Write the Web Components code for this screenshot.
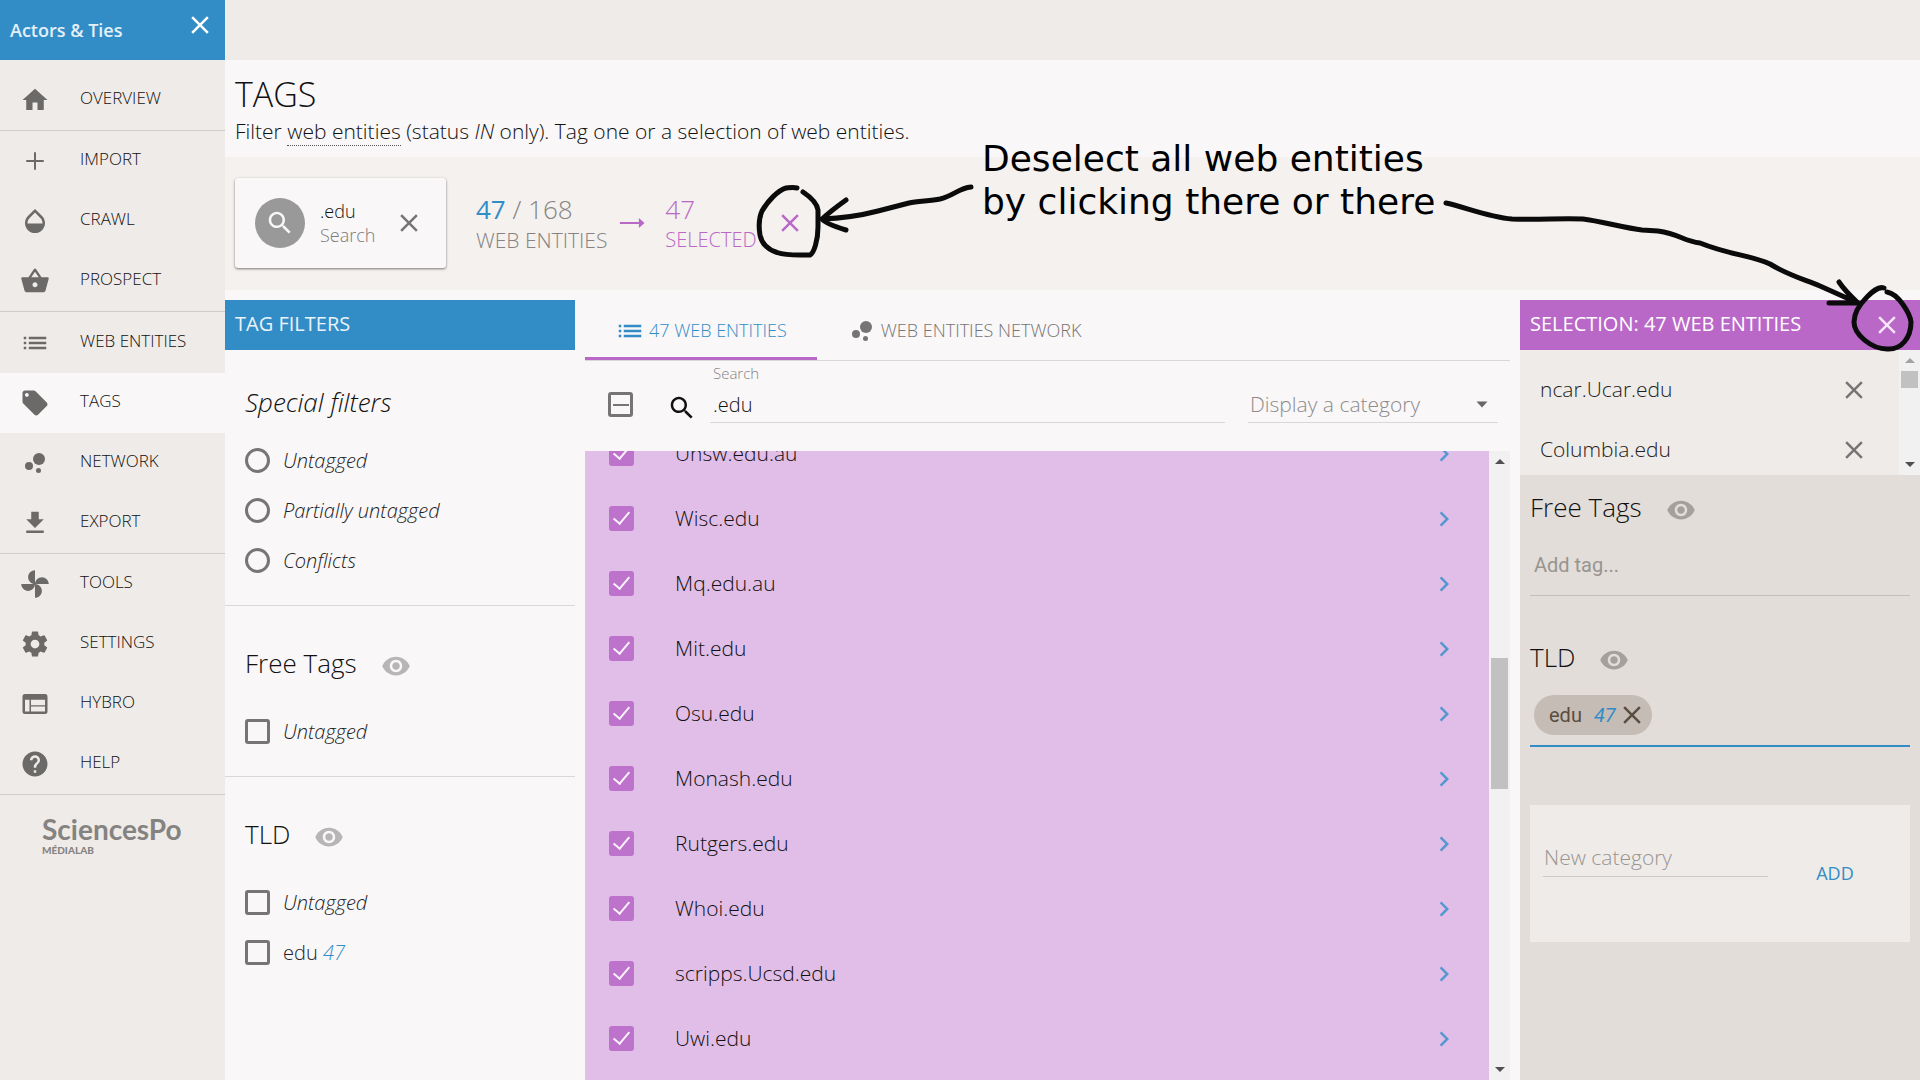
<!DOCTYPE html>
<html lang="en">
<head>
<meta charset="utf-8">
<title>Actors &amp; Ties - Tags</title>
<style>
  html, body { height: 100%; margin: 0; }
  body {
    --blue: #328dc7;
    --purple: #ba68c8;
    --paper: #f9f7f8;
    --sand: #efebe8;
    --line: #d9d7d8;
    --muted: #767474;
    background: var(--paper);
    color: #111;
    font: 300 21px/30px "Open Sans", "Noto Sans", sans-serif;
    overflow: hidden;
  }
</style>
</head>
<body>
<tags-app></tags-app>

<script>
const define = (name, html, setup) => {
  const template = document.createElement('template');
  template.innerHTML = '<style>*{box-sizing:border-box}button,input,select{font:inherit;color:inherit;letter-spacing:inherit;background:none;border:0;padding:0;margin:0;outline:0}button{display:inline-flex;align-items:center;justify-content:center}</style>' + html;
  customElements.define(name, class extends HTMLElement {
    connectedCallback() {
      if (this.shadowRoot) return;
      const root = this.attachShadow({ mode: 'open' });
      root.append(template.content.cloneNode(true));
      if (setup) setup(this, root);
    }
  });
};

const ICONS = {
  home: '<path d="M10 20v-6h4v6h5v-8h3L12 3 2 12h3v8z"/>',
  add: '<path d="M19 12.8h-6.2V19h-1.6v-6.2H5v-1.6h6.2V5h1.6v6.2H19z"/>',
  drop: '<path d="M17.66 8L12 2.35 6.34 8C4.78 9.56 4 11.64 4 13.64s.78 4.11 2.34 5.67 3.61 2.35 5.66 2.35 4.1-.79 5.66-2.35S20 15.64 20 13.64 19.22 9.56 17.66 8zM6 14c.01-2 .62-3.27 1.76-4.4L12 5.27l4.24 4.38C17.38 10.77 17.99 12 18 14H6z"/>',
  basket: '<path d="M17.21 9l-4.38-6.56c-.19-.28-.51-.42-.83-.42-.32 0-.64.14-.83.43L6.79 9H2c-.55 0-1 .45-1 1 0 .09.01.18.04.27l2.54 9.27c.23.84 1 1.46 1.92 1.46h13c.92 0 1.69-.62 1.93-1.46l2.54-9.27L23 10c0-.55-.45-1-1-1h-4.79zM9 9l3-4.4L15 9H9zm3 8c-1.1 0-2-.9-2-2s.9-2 2-2 2 .9 2 2-.9 2-2 2z"/>',
  list: '<path d="M3 13h2v-2H3v2zm0 4h2v-2H3v2zm0-8h2V7H3v2zm4 4h14v-2H7v2zm0 4h14v-2H7v2zM7 7v2h14V7H7z"/>',
  tag: '<path d="M21.41 11.58l-9-9C12.05 2.22 11.55 2 11 2H4c-1.1 0-2 .9-2 2v7c0 .55.22 1.05.59 1.42l9 9c.36.36.86.58 1.41.58.55 0 1.05-.22 1.41-.59l7-7c.37-.36.59-.86.59-1.41 0-.55-.23-1.06-.59-1.42zM5.5 7C4.67 7 4 6.33 4 5.5S4.67 4 5.5 4 7 4.67 7 5.5 6.33 7 5.5 7z"/>',
  bubbles: '<circle cx="7.2" cy="14.4" r="3.2"/><circle cx="14.8" cy="18" r="2"/><circle cx="15.2" cy="8.8" r="4.8"/>',
  download: '<path d="M19 9h-4V3H9v6H5l7 7 7-7zM5 18v2h14v-2H5z"/>',
  toys: '<path d="M12 12c0-3 2.5-5.5 5.5-5.5S23 9 23 12H12zm0 0c0 3-2.5 5.5-5.5 5.5S1 15 1 12h11zm0 0c-3 0-5.5-2.5-5.5-5.5S9 1 12 1v11zm0 0c3 0 5.5 2.5 5.5 5.5S15 23 12 23V12z"/>',
  settings: '<path d="M19.43 12.98c.04-.32.07-.64.07-.98s-.03-.66-.07-.98l2.11-1.65c.19-.15.24-.42.12-.64l-2-3.46c-.12-.22-.39-.3-.61-.22l-2.49 1c-.52-.4-1.08-.73-1.69-.98l-.38-2.65C14.46 2.18 14.25 2 14 2h-4c-.25 0-.46.18-.49.42l-.38 2.65c-.61.25-1.17.59-1.69.98l-2.49-1c-.23-.09-.49 0-.61.22l-2 3.46c-.13.22-.07.49.12.64l2.11 1.65c-.04.32-.07.65-.07.98s.03.66.07.98l-2.11 1.65c-.19.15-.24.42-.12.64l2 3.46c.12.22.39.3.61.22l2.49-1c.52.4 1.08.73 1.69.98l.38 2.65c.03.24.24.42.49.42h4c.25 0 .46-.18.49-.42l.38-2.65c.61-.25 1.17-.59 1.69-.98l2.49 1c.23.09.49 0 .61-.22l2-3.46c.12-.22.07-.49-.12-.64l-2.11-1.65zM12 15.5c-1.93 0-3.5-1.57-3.5-3.5s1.57-3.5 3.5-3.5 3.5 1.57 3.5 3.5-1.57 3.5-3.5 3.5z"/>',
  web: '<path fill-rule="evenodd" d="M4 4h16a2 2 0 0 1 2 2v12a2 2 0 0 1-2 2H4a2 2 0 0 1-2-2V6a2 2 0 0 1 2-2zM4 8.6V18h3.6V8.6zM8.8 8.6v4.3H20V8.6zM8.8 14v4H20v-4z"/>',
  help: '<path d="M12 2C6.48 2 2 6.48 2 12s4.48 10 10 10 10-4.48 10-10S17.52 2 12 2zm1 17h-2v-2h2v2zm2.07-7.75l-.9.92C13.45 12.9 13 13.5 13 15h-2v-.5c0-1.1.45-2.1 1.17-2.83l1.24-1.26c.37-.36.59-.86.59-1.41 0-1.1-.9-2-2-2s-2 .9-2 2H8c0-2.21 1.79-4 4-4s4 1.79 4 4c0 .88-.36 1.68-.93 2.25z"/>',
  search: '<path d="M15.5 14h-.79l-.28-.27C15.41 12.59 16 11.11 16 9.5 16 5.91 13.09 3 9.5 3S3 5.91 3 9.5 5.91 16 9.5 16c1.61 0 3.09-.59 4.23-1.57l.27.28v.79l5 4.99L20.49 19l-4.99-5zm-6 0C7.01 14 5 11.99 5 9.5S7.01 5 9.5 5 14 7.01 14 9.5 11.99 14 9.5 14z"/>',
  close: '<path d="M19 6.41L17.59 5 12 10.59 6.41 5 5 6.41 10.59 12 5 17.59 6.41 19 12 13.41 17.59 19 19 17.59 13.41 12z"/>',
  eye: '<path d="M12 4.5C7 4.5 2.73 7.61 1 12c1.73 4.39 6 7.5 11 7.5s9.27-3.11 11-7.5c-1.73-4.39-6-7.5-11-7.5zM12 17c-2.76 0-5-2.24-5-5s2.24-5 5-5 5 2.24 5 5-2.24 5-5 5zm0-8c-1.66 0-3 1.34-3 3s1.34 3 3 3 3-1.34 3-3-1.34-3-3-3z"/>',
  chevron: '<path d="M10 6L8.59 7.41 13.17 12l-4.58 4.59L10 18l6-6z"/>',
  arrow: '<path d="M2.3 11.2h15.2V8L22 12l-4.5 4v-3.2H2.3z"/>',
  caret: '<path d="M6.500 9.500h11L12 15.500z"/>'
};

define('ui-icon', `
  <style>:host{display:inline-flex;flex:none;width:30px;height:30px}svg{width:100%;height:100%;fill:currentColor}</style>
  <svg viewBox="0 0 24 24" aria-hidden="true"></svg>`,
  (el, root) => { root.querySelector('svg').innerHTML = ICONS[el.getAttribute('name')]; });

define('nav-item', `
  <style>
    :host{display:block}
    a{display:flex;align-items:center;gap:30px;height:60px;padding-left:20px;color:inherit;text-decoration:none;font-size:17px;line-height:24px}
    span{padding-bottom:4px}
    ui-icon{color:#6b6a68}
    :host([active]) a{background:var(--paper)}
  </style>
  <a href="#"><span><slot></slot></span></a>`,
  (el, root) => {
    const link = root.querySelector('a');
    const icon = document.createElement('ui-icon');
    icon.setAttribute('name', el.getAttribute('icon'));
    link.prepend(icon);
    if (el.hasAttribute('active')) link.setAttribute('aria-current', 'page');
  });

define('side-nav', `
  <style>
    :host{display:block;background:var(--sand);overflow:hidden}
    header{display:flex;justify-content:space-between;height:60px;padding:10px;background:var(--blue);color:#e4f0f8;font-size:18px;font-weight:600;line-height:40px}
    header button{width:30px;height:30px;color:#fff}
    nav{padding-top:10px}
    section{border-bottom:1px solid #cfccca}
    section:nth-of-type(3){padding-top:1px}
    .logo{display:flex;flex-direction:column;padding:17px 42px;color:#858382;font-family:Lato,"Open Sans",sans-serif}
    .logo b{font-size:28px;line-height:34px;font-weight:700}
    .logo small{font-size:10px;line-height:8px;font-weight:900}
  </style>
  <header><span>Actors &amp; Ties</span><button aria-label="Close project"><ui-icon name="close"></ui-icon></button></header>
  <nav>
    <section><nav-item icon="home">OVERVIEW</nav-item></section>
    <section>
      <nav-item icon="add">IMPORT</nav-item>
      <nav-item icon="drop">CRAWL</nav-item>
      <nav-item icon="basket">PROSPECT</nav-item>
    </section>
    <section>
      <nav-item icon="list">WEB ENTITIES</nav-item>
      <nav-item icon="tag" active>TAGS</nav-item>
      <nav-item icon="bubbles">NETWORK</nav-item>
      <nav-item icon="download">EXPORT</nav-item>
    </section>
    <section>
      <nav-item icon="toys">TOOLS</nav-item>
      <nav-item icon="settings">SETTINGS</nav-item>
      <nav-item icon="web">HYBRO</nav-item>
      <nav-item icon="help">HELP</nav-item>
    </section>
  </nav>
  <div class="logo"><b>SciencesPo</b><small>MÉDIALAB</small></div>`);

define('page-heading', `
  <style>
    :host{display:block;height:97px;padding:12px 10px 0;background:var(--paper)}
    h1{margin:0;font-size:34px;line-height:44px;font-weight:300}
    p{margin:0}
    a{color:inherit;text-decoration:none;border-bottom:1px dotted #555}
  </style>
  <h1>TAGS</h1>
  <p>Filter <a href="#">web entities</a> (status <i>IN</i> only). Tag one or a selection of web entities.</p>`);

define('search-card', `
  <style>
    :host{display:flex;align-items:center;gap:15px;width:211px;height:90px;padding:0 20px;background:var(--paper);border-radius:3px;box-shadow:0 1px 3px rgba(0,0,0,.35),0 1px 2px rgba(0,0,0,.2);font-size:18px;line-height:24px}
    .disc{display:flex;align-items:center;justify-content:center;width:50px;height:50px;border-radius:50%;background:#999;color:var(--paper)}
    .text{flex:1}
    .kind{color:#7c7a7a}
    button{width:34px;height:40px;color:var(--muted)}
  </style>
  <span class="disc"><ui-icon name="search"></ui-icon></span>
  <div class="text"><div>.edu</div><div class="kind">Search</div></div>
  <button aria-label="Remove filter"><ui-icon name="close"></ui-icon></button>`);

define('stat-block', `
  <style>:host{display:block;padding-top:2px;color:#858383}.n{font-size:26px;line-height:32px}</style>
  <div class="n"><slot name="count"></slot></div><div><slot></slot></div>`);

define('filter-bar', `
  <style>
    :host{display:flex;align-items:center;height:133px;padding:0 10px 2px;background:#f4f1ee}
    search-card{margin-right:30px}
    b{font-weight:400;color:var(--blue)}
    .sel{color:var(--purple);font-size:20px}
    .go{margin:0 18px 0 10px;color:var(--purple)}
    button{width:40px;height:40px;margin-left:13px;color:var(--purple)}
  </style>
  <search-card></search-card>
  <stat-block><span slot="count"><b>47</b> / 168</span>WEB ENTITIES</stat-block>
  <ui-icon class="go" name="arrow"></ui-icon>
  <stat-block class="sel"><span slot="count">47</span>SELECTED</stat-block>
  <button aria-label="Deselect all"><ui-icon name="close"></ui-icon></button>`);

define('panel-title', `
  <style>
    :host{display:flex;align-items:center;justify-content:space-between;height:50px;padding:0 18px 2px 10px;background:var(--blue);color:#e9f3f9;font-size:20px;font-weight:400}
    :host([accent]){background:var(--purple);color:#fff}
  </style><slot></slot>`);

define('filter-option', `
  <style>
    :host{display:block;font-size:20px}
    label{display:flex;align-items:center;gap:13px;height:50px}
    input{appearance:none;width:25px;height:25px;border:3px solid var(--muted);border-radius:3px}
    input[type=radio]{border-radius:50%}
    span{padding-top:1px}
  </style>
  <label><input><span><slot></slot></span></label>`,
  (el, root) => {
    const input = root.querySelector('input');
    input.type = el.getAttribute('type');
    input.name = 'filter';
  });

define('category-title', `
  <style>
    :host{display:flex;align-items:center;gap:24px;height:60px;font-size:26px;line-height:36px}
    button{width:30px;height:30px;color:#b7b5b6;margin-top:6px}
    :host([dim]){padding-top:4px}
    :host([dim]) button{color:#a4a09d}
    :host([plain]) button{display:none}
  </style>
  <span><slot></slot></span><button aria-label="Toggle visibility"><ui-icon name="eye"></ui-icon></button>`);

define('tag-filters', `
  <style>
    :host{display:block;min-height:0;overflow:hidden}
    section{padding:22px 20px 20px;border-bottom:1px solid var(--line)}
    section+section{padding-top:27px}
    section:last-child{border:0}
    category-title{margin-bottom:13px}
    section:first-of-type category-title{margin-bottom:3px}
    em{color:var(--blue)}
    .opts{color:#222}
  </style>
  <panel-title>TAG FILTERS</panel-title>
  <section>
    <category-title plain><i>Special filters</i></category-title>
    <div class="opts">
    <filter-option type="radio"><i>Untagged</i></filter-option>
    <filter-option type="radio"><i>Partially untagged</i></filter-option>
    <filter-option type="radio"><i>Conflicts</i></filter-option></div>
  </section>
  <section>
    <category-title>Free Tags</category-title>
    <div class="opts"><filter-option type="checkbox"><i>Untagged</i></filter-option></div>
  </section>
  <section>
    <category-title>TLD</category-title>
    <div class="opts"><filter-option type="checkbox"><i>Untagged</i></filter-option>
    <filter-option type="checkbox">edu <em>47</em></filter-option></div>
  </section>`);

define('scroll-rail', `
  <style>
    :host{display:flex;flex-direction:column;align-items:center;width:21px;background:#f1f1f1}
    .cap{display:flex;flex:none;align-items:center;height:21px}
    .cap::before{content:"";border:5px solid transparent;border-top:0;border-bottom-color:#505050}
    .cap.down::before{border-bottom:0;border-top:5px solid #505050}
    :host([start]) .up::before{border-bottom-color:#a3a3a3}
    .before{flex:var(--before,0)}
    .thumb{flex:var(--size,1);width:17px;background:#c1c1c1}
    .after{flex:var(--after,0)}
  </style>
  <i class="cap up"></i><i class="before"></i><i class="thumb"></i><i class="after"></i><i class="cap down"></i>`);

define('entity-row', `
  <style>
    :host{display:block;flex:none}
    label{display:flex;align-items:center;height:65px;padding:0 30px 0 24px}
    input{appearance:none;display:grid;place-items:center;width:25px;height:25px;margin-right:41px;border-radius:3px;background:#bd72cb}
    input::before{content:"";width:7px;height:14px;margin-bottom:5px;border:solid #fbf2fc;border-width:0 2px 2px 0;rotate:40deg}
    span{flex:1;padding-bottom:1px}
    ui-icon{color:#5597d0}
  </style>
  <label><input type="checkbox" checked><span><slot></slot></span><ui-icon name="chevron"></ui-icon></label>`);

define('entity-tabs', `
  <style>
    :host{display:flex;height:61px;border-bottom:1px solid var(--line);font-size:18px;line-height:26px}
    button{gap:4px;height:60px;padding:2px 30px 0;border-bottom:3px solid transparent;color:var(--muted);white-space:nowrap}
    button ui-icon{margin-top:2px}
    button[aria-selected=true]{color:var(--blue);border-color:var(--purple)}
  </style>
  <button role="tab" aria-selected="true"><ui-icon name="list"></ui-icon>47 WEB ENTITIES</button>
  <button role="tab" aria-selected="false"><ui-icon name="bubbles"></ui-icon>WEB ENTITIES NETWORK</button>`);

define('entity-toolbar', `
  <style>
    :host{display:flex;height:90px;padding:0 12px 0 23px}
    .all{appearance:none;display:grid;place-items:center;flex:none;width:25px;height:25px;margin:31px 34px 0 0;border:3px solid var(--muted);border-radius:3px}
    .all::before{content:"";width:16px;height:2px;background:var(--muted)}
    .lens{margin:32px 13px 0 0}
    .field{display:flex;flex-direction:column;border-bottom:1px solid var(--line);height:62px;padding-left:3px}
    .search{flex:1;margin-right:23px}
    .field label{font-size:15px;line-height:24px;color:#858383}
    .field input{height:38px;padding-top:2px;width:100%;font-size:20px}
    .pick{width:250px;flex-direction:row;align-items:flex-end;padding-left:2px;color:#8d8b8b}
    .pick select{appearance:none;flex:1;height:36px}
    .pick ui-icon{width:24px;height:24px;margin:0 4px 6px 0;color:#666}
  </style>
  <input class="all" type="checkbox" aria-label="Select all">
  <ui-icon class="lens" name="search"></ui-icon>
  <div class="field search"><label for="q">Search</label><input id="q" value=".edu"></div>
  <div class="field pick"><select aria-label="Category"><option>Display a category</option></select><ui-icon name="caret"></ui-icon></div>`,
  (el, root) => { root.querySelector('.all').indeterminate = true; });

define('entity-browser', `
  <style>
    :host{display:flex;flex-direction:column;min-height:0}
    .list{flex:1;display:flex;min-height:0}
    .rows{flex:1;display:flex;flex-direction:column;background:#e1bee7;overflow:hidden}
    entity-row:first-child{margin-top:-30px}
    scroll-rail{--before:186;--size:131;--after:270}
  </style>
  <entity-tabs></entity-tabs>
  <entity-toolbar></entity-toolbar>
  <div class="list"><div class="rows"></div><scroll-rail></scroll-rail></div>`,
  (el, root) => {
    const names = ['Unsw.edu.au', 'Wisc.edu', 'Mq.edu.au', 'Mit.edu', 'Osu.edu', 'Monash.edu', 'Rutgers.edu', 'Whoi.edu', 'scripps.Ucsd.edu', 'Uwi.edu'];
    root.querySelector('.rows').append(...names.map(name => {
      const row = document.createElement('entity-row');
      row.textContent = name;
      return row;
    }));
  });

define('picked-entity', `
  <style>
    :host{display:flex;align-items:center;justify-content:space-between;height:60px;padding:0 25px 0 20px;color:#222}
    button{width:40px;height:40px;color:var(--muted)}
    span{padding-bottom:3px}
  </style>
  <span><slot></slot></span><button aria-label="Deselect"><ui-icon name="close"></ui-icon></button>`);

define('tag-chip', `
  <style>
    :host{display:inline-flex;align-items:center;height:40px;padding:0 5px 0 15px;border-radius:20px;background:#c6bcb6;color:#5a4e40;font:400 20px/30px Roboto,sans-serif}
    em{margin:0 1px 0 12px;color:var(--blue);font:italic 400 20px/30px Roboto,sans-serif}
    button{width:30px;height:30px;color:#5a4e40}
  </style>
  <span>edu</span><em>47</em><button aria-label="Remove tag"><ui-icon name="close"></ui-icon></button>`);

define('selection-panel', `
  <style>
    :host{display:block;min-height:0;background:#e2ddd9;overflow:hidden}
    panel-title button{width:30px;height:30px;color:#f6e6f8;margin-top:2px}
    .picked{display:flex;height:125px;background:var(--sand)}
    .rows{flex:1;padding-top:10px;overflow:hidden}
    scroll-rail{--size:17;--after:66;flex:none}
    section{height:150px;padding:0 10px}
    .tags{display:flex;align-items:center;height:61px;padding:0 4px;border-bottom:1px solid #c4bfbc}
    .tags input{width:100%;font:400 20px/30px Roboto,sans-serif}
    .tags input::placeholder{color:#989490;opacity:1}
    .tags.on{height:62px;border-bottom:2px solid var(--blue)}
    form{display:flex;align-items:center;height:137px;margin:30px 10px;padding:0 13px;background:var(--sand)}
    form input{width:225px;height:40px;margin-bottom:34px;padding:2px 1px 0;border-bottom:1px solid #ccc9c7}
    form input::placeholder{color:#989593;opacity:1}
    form button{width:110px;height:45px;margin:0 0 2px 12px;color:var(--blue);font-size:18px;font-weight:400}
  </style>
  <panel-title accent><span>SELECTION: 47 WEB ENTITIES</span><button aria-label="Deselect all"><ui-icon name="close"></ui-icon></button></panel-title>
  <div class="picked">
    <div class="rows"><picked-entity>ncar.Ucar.edu</picked-entity><picked-entity>Columbia.edu</picked-entity></div>
    <scroll-rail start></scroll-rail>
  </div>
  <section><category-title dim>Free Tags</category-title><div class="tags"><input aria-label="Add tag" placeholder="Add tag..."></div></section>
  <section><category-title dim>TLD</category-title><div class="tags on"><tag-chip></tag-chip></div></section>
  <form><input aria-label="New category" placeholder="New category"><button type="button">ADD</button></form>`);

define('ink-note', `
  <style>
    :host{position:absolute;inset:0;pointer-events:none;color:#000}
    svg{position:absolute;left:0;top:0;width:1920px;height:1080px;fill:none;stroke:#0b0b0b;stroke-width:5;stroke-linecap:round;stroke-linejoin:round}
    p{position:absolute;left:982px;top:137px;margin:0;font:400 36px/43px "DejaVu Sans",sans-serif;white-space:nowrap}
  </style>
  <svg viewBox="0 0 1920 1080" aria-hidden="true">
    <path d="M797 188C793 187 788 188 786 188C778 190 767 202 762 211C758 220 759 229 760 235C762 245 769 250 777 252.500C787 256 798 255 810 255C814 253 818 240 818 227V210C817 203 809 196 803 192"/>
    <path d="M971 187C959 188 953 196 940 199C930 201 917 201 909 203L878 211Q851 218 822 219M846 200Q832 210 822 219Q826 224 846 230"/>
    <path d="M1446 203C1462 206 1488 217 1512 219C1540 220 1560 218 1583 219C1600 221 1625 228 1642 230L1658 231C1680 234 1683 241 1700 243C1730 255 1750 255 1770 264C1788 275 1803 279 1820 286L1858 303M1839 282Q1845 291 1858 303H1829"/>
    <path d="M1884 288C1878 286 1872 292 1867 297C1860 304 1854 312 1854 322C1854 335 1872 349 1887 349C1902 350 1911 337 1911 322C1910 314 1899 294 1887 292"/>
  </svg>
  <p>Deselect all web entities<br>by clicking there or there</p>`);

define('tags-app', `
  <style>
    :host{position:relative;display:grid;grid-template-columns:225px minmax(0,1fr);height:100vh;overflow:hidden}
    main{display:flex;flex-direction:column;min-height:0}
    .top{flex:none;height:60px;background:var(--sand)}
    page-heading,filter-bar{flex:none}
    .work{flex:1;display:grid;grid-template-columns:350px minmax(0,1fr) 400px;grid-template-rows:minmax(0,1fr);gap:10px;padding-top:10px;min-height:0}
  </style>
  <side-nav></side-nav>
  <main>
    <div class="top"></div>
    <page-heading></page-heading>
    <filter-bar></filter-bar>
    <div class="work">
      <tag-filters></tag-filters>
      <entity-browser></entity-browser>
      <selection-panel></selection-panel>
    </div>
  </main>
  <ink-note></ink-note>`);
</script>
</body>
</html>
